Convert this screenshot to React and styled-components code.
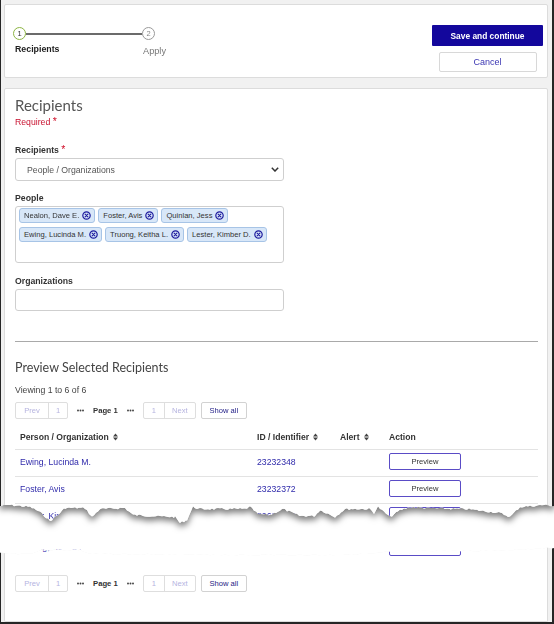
import React from "react";
import styled, { createGlobalStyle } from "styled-components";

const GlobalStyle = createGlobalStyle`
  html, body {
    margin: 0;
    padding: 0;
    background: #fff;
  }
  body {
    font-family: "Liberation Sans", Arial, sans-serif;
    font-size: 8.7px;
    color: #333;
  }
  * {
    box-sizing: border-box;
  }
`;

const people = [
  "Nealon, Dave E.",
  "Foster, Avis",
  "Quinlan, Jess",
  "Ewing, Lucinda M.",
  "Truong, Keitha L.",
  "Lester, Kimber D.",
];

const rows = [
  { name: "Ewing, Lucinda M.", id: "23232348" },
  { name: "Foster, Avis", id: "23232372" },
  { name: "Lester, Kimber D.", id: "52621934" },
];

// torn paper edge, key points traced from the screenshot
const tearKeys = [
  [0, 506], [10, 505], [30, 507], [40, 512], [50, 521], [58, 515], [65, 508],
  [85, 508], [92, 517], [100, 509], [125, 508], [133, 515], [150, 516],
  [175, 517], [180, 523], [187, 520], [193, 507], [200, 509], [245, 509],
  [250, 507], [258, 514], [270, 515], [283, 509], [300, 516], [315, 516],
  [320, 510], [335, 517], [345, 509], [370, 509], [374, 513], [378, 507],
  [390, 517], [400, 510], [410, 507], [427, 508], [467, 509], [500, 513],
  [510, 517], [520, 507], [544, 505], [554, 506],
];

function roughEdge(keys, step, amp, seed) {
  let s = seed;
  const rand = () => {
    s = (s * 9301 + 49297) % 233280;
    return s / 233280;
  };
  const pts = [];
  for (let i = 0; i < keys.length - 1; i++) {
    const [x0, y0] = keys[i];
    const [x1, y1] = keys[i + 1];
    for (let x = x0; x < x1; x += step) {
      const t = (x - x0) / (x1 - x0);
      pts.push([x, y0 + (y1 - y0) * t + (rand() - 0.5) * amp]);
    }
  }
  pts.push(keys[keys.length - 1]);
  return pts;
}

const tearClip = `polygon(0 0, 554px 0, ${roughEdge(tearKeys, 2, 2, 7)
  .reverse()
  .map(([x, y]) => `${x}px ${y.toFixed(1)}px`)
  .join(", ")})`;

const lowerKeys = [
  [0, 7], [12, 7], [18, 8], [34, 7], [40, 4], [80, 4], [90, 8], [250, 9],
  [330, 9], [370, 8], [388, 6], [407, 9], [418, 5], [470, 5], [480, 5], [554, 2],
];

const lowerClip = `polygon(${roughEdge(lowerKeys, 3, 1.2, 3)
  .map(([x, y]) => `${x}px ${y.toFixed(1)}px`)
  .join(", ")}, 554px 100%, 0 100%)`;

const CircleX = () => (
  <svg width="9" height="9" viewBox="0 0 9 9">
    <circle cx="4.5" cy="4.5" r="3.7" fill="none" stroke="#1d1b9e" strokeWidth="1.2" />
    <path d="M3.1 3.1l2.8 2.8M5.9 3.1l-2.8 2.8" stroke="#1d1b9e" strokeWidth="1.1" strokeLinecap="round" />
  </svg>
);

const SortIcon = () => (
  <svg width="5" height="8" viewBox="0 0 5 8">
    <path d="M0 3.4L2.5 0.6 5 3.4z M0 4.6L2.5 7.4 5 4.6z" fill="#444" />
  </svg>
);

const ChevronDown = () => (
  <svg width="8" height="5" viewBox="0 0 8 5">
    <path d="M0.8 0.8L4 4 7.2 0.8" fill="none" stroke="#333" strokeWidth="1.5" />
  </svg>
);

const Dots = () => (
  <DotsIcon width="7" height="3" viewBox="0 0 7 3">
    <circle cx="1" cy="1.5" r="0.95" fill="#444" />
    <circle cx="3.5" cy="1.5" r="0.95" fill="#444" />
    <circle cx="6" cy="1.5" r="0.95" fill="#444" />
  </DotsIcon>
);

function Paging() {
  return (
    <Pager>
      <PagerGroup>
        <PagerCell $w={33}>Prev</PagerCell>
        <PagerCell $w={20}>1</PagerCell>
      </PagerGroup>
      <Dots />
      <PageLabel>Page 1</PageLabel>
      <Dots />
      <PagerGroup>
        <PagerCell $w={21}>1</PagerCell>
        <PagerCell $w={32}>Next</PagerCell>
      </PagerGroup>
      <ShowAll>Show all</ShowAll>
    </Pager>
  );
}

function RecipientRow({ name, id, last }) {
  return (
    <Row $last={last}>
      <Cell>
        <LinkText>{name}</LinkText>
      </Cell>
      <Cell>
        <LinkText>{id}</LinkText>
      </Cell>
      <Cell />
      <Cell>
        <PreviewButton>Preview</PreviewButton>
      </Cell>
    </Row>
  );
}

export default function App() {
  return (
    <>
      <GlobalStyle />
      <Frame>
        <TopTear>
          <TopSheet>
            <HeaderCard>
              <Stepper>
                <StepDot $active>1</StepDot>
                <StepLine />
                <StepDot>2</StepDot>
                <StepLabel $active>Recipients</StepLabel>
                <span />
                <StepLabel>Apply</StepLabel>
              </Stepper>
              <ActionColumn>
                <PrimaryButton>Save and continue</PrimaryButton>
                <SecondaryButton>Cancel</SecondaryButton>
              </ActionColumn>
            </HeaderCard>

            <MainCard>
              <SectionTitle>Recipients</SectionTitle>
              <RequiredNote>
                Required <Star>*</Star>
              </RequiredNote>

              <FieldLabel $top={16.5}>
                Recipients <Star>*</Star>
              </FieldLabel>
              <SelectBox>
                <span>People / Organizations</span>
                <ChevronDown />
              </SelectBox>

              <FieldLabel $top={11}>People</FieldLabel>
              <ChipBox>
                {people.map((p) => (
                  <Chip key={p}>
                    {p}
                    <CircleX />
                  </Chip>
                ))}
              </ChipBox>

              <FieldLabel $top={12}>Organizations</FieldLabel>
              <TextBox />

              <Divider />

              <PreviewTitle>Preview Selected Recipients</PreviewTitle>
              <ViewingText>Viewing 1 to 6 of 6</ViewingText>
              <Paging />

              <Table>
                <HeadRow>
                  <HeadCell>
                    Person / Organization <SortIcon />
                  </HeadCell>
                  <HeadCell>
                    ID / Identifier <SortIcon />
                  </HeadCell>
                  <HeadCell>
                    Alert <SortIcon />
                  </HeadCell>
                  <HeadCell>Action</HeadCell>
                </HeadRow>
                {rows.map((r) => (
                  <RecipientRow key={r.id} name={r.name} id={r.id} />
                ))}
              </Table>
            </MainCard>
          </TopSheet>
        </TopTear>

        <TearGap />

        <BottomSheet>
          <TailCard>
            <CutOff>
              <RecipientRow name="Truong, Keitha L." id="23232391" last />
            </CutOff>
            <Paging />
          </TailCard>
        </BottomSheet>
      </Frame>
    </>
  );
}

const Frame = styled.div`
  width: 554px;
  height: 624px;
  display: flex;
  flex-direction: column;
  overflow: hidden;
  background: #fff;
`;

const TopTear = styled.div`
  height: 530px;
  flex-shrink: 0;
  filter: drop-shadow(0 4px 3px rgba(0, 0, 0, 0.5));
`;

const TopSheet = styled.div`
  height: 100%;
  background: #f1f1f1;
  border-left: 1px solid #262626;
  border-right: 2px solid #262626;
  padding: 4px 4px 0 3px;
  overflow: hidden;
  clip-path: ${tearClip};
`;

const TearGap = styled.div`
  height: 16px;
  flex-shrink: 0;
`;

const BottomSheet = styled.div`
  height: 78px;
  flex-shrink: 0;
  background: #f1f1f1;
  border-left: 1px solid #262626;
  border-right: 2px solid #262626;
  border-bottom: 2px solid #262626;
  padding: 0 4px 2px 3px;
  clip-path: ${lowerClip};
`;

const HeaderCard = styled.div`
  height: 74px;
  background: #fff;
  border: 1px solid #dcdcdc;
  border-radius: 2px;
  padding: 20px 4px 0 8px;
  display: flex;
  justify-content: space-between;
  align-items: flex-start;
`;

const Stepper = styled.div`
  display: grid;
  grid-template-columns: 13px 116px 13px;
  grid-template-rows: 13px auto;
  margin-top: 2px;
`;

const StepDot = styled.div`
  width: 13px;
  height: 13px;
  border-radius: 50%;
  border: 1.5px solid ${(p) => (p.$active ? "#8db543" : "#9a9a9a")};
  color: ${(p) => (p.$active ? "#333" : "#888")};
  font-size: 7.5px;
  display: flex;
  align-items: center;
  justify-content: center;
  background: #fff;
`;

const StepLine = styled.div`
  height: 2px;
  background: #6b6b6b;
  align-self: center;
`;

const StepLabel = styled.div`
  white-space: nowrap;
  line-height: 12px;
  font-size: ${(p) => (p.$active ? "8.8px" : "9.2px")};
  font-weight: ${(p) => (p.$active ? "bold" : "normal")};
  color: ${(p) => (p.$active ? "#222" : "#777")};
  margin-top: ${(p) => (p.$active ? "3px" : "5px")};
  margin-left: ${(p) => (p.$active ? "2px" : "1px")};
`;

const ActionColumn = styled.div`
  display: flex;
  flex-direction: column;
  align-items: center;
  gap: 6px;
`;

const PrimaryButton = styled.button`
  width: 111px;
  height: 21px;
  border: none;
  border-radius: 1px;
  background: #13079c;
  color: #fff;
  font-family: inherit;
  font-size: 8.4px;
  font-weight: bold;
  padding: 0;
`;

const SecondaryButton = styled.button`
  width: 98px;
  height: 20px;
  border: 1px solid #d8d8d8;
  border-radius: 2px;
  background: #fff;
  color: #3b36b3;
  font-family: inherit;
  font-size: 9px;
  padding: 0;
`;

const MainCard = styled.div`
  margin-top: 10px;
  background: #fff;
  border: 1px solid #dcdcdc;
  border-radius: 2px;
  padding: 7px 9px 40px 10px;
`;

const TailCard = styled.div`
  background: #fff;
  border: 1px solid #dcdcdc;
  border-top: none;
  border-radius: 0 0 2px 2px;
  padding: 0 9px 28.5px 10px;
`;

const SectionTitle = styled.h2`
  margin: 0;
  font-family: Lato, "Liberation Sans", sans-serif;
  font-size: 15px;
  line-height: 18px;
  font-weight: 400;
  color: #555;
`;

const PreviewTitle = styled.h3`
  margin: 18px 0 0;
  font-family: Lato, "Liberation Sans", sans-serif;
  font-size: 12.5px;
  line-height: 15px;
  font-weight: 400;
  color: #444;
`;

const RequiredNote = styled.div`
  margin-top: 1.5px;
  height: 12px;
  line-height: 12px;
  color: #c8102e;
`;

const Star = styled.span`
  color: #d0112b;
  font-size: 10.5px;
  line-height: 0;
  font-weight: normal;
`;

const FieldLabel = styled.div`
  margin-top: ${(p) => p.$top}px;
  margin-bottom: 2px;
  height: 12px;
  line-height: 12px;
  font-weight: bold;
  color: #333;
`;

const SelectBox = styled.div`
  width: 269px;
  height: 23px;
  border: 1px solid #cfcfcf;
  border-radius: 3px;
  padding: 0 4px 0 11px;
  display: flex;
  align-items: center;
  justify-content: space-between;
  color: #555;
`;

const ChipBox = styled.div`
  width: 269px;
  height: 57px;
  border: 1px solid #cfcfcf;
  border-radius: 3px;
  padding: 1px 3px;
  display: flex;
  flex-wrap: wrap;
  align-content: flex-start;
  gap: 4px 3px;
`;

const Chip = styled.span`
  height: 15px;
  display: inline-flex;
  align-items: center;
  gap: 3px;
  padding: 0 3px 0 4px;
  background: #d8e7f8;
  border: 1px solid #a7c4e6;
  border-radius: 3px;
  font-size: 7.6px;
  color: #333;
  white-space: nowrap;
`;

const TextBox = styled.div`
  width: 269px;
  height: 22px;
  border: 1px solid #cfcfcf;
  border-radius: 3px;
`;

const Divider = styled.hr`
  margin: 30px 0 0;
  border: none;
  border-top: 1px solid #a9a9a9;
`;

const ViewingText = styled.div`
  margin-top: 9px;
  line-height: 12px;
  color: #444;
`;

const Pager = styled.div`
  margin-top: 6px;
  display: flex;
  align-items: center;
  gap: 9px;
  height: 17px;
  font-size: 7.6px;
`;

const PagerGroup = styled.div`
  display: flex;
  height: 17px;
  border: 1px solid #dedede;
  border-radius: 2px;
`;

const PagerCell = styled.span`
  width: ${(p) => p.$w - 1}px;
  display: flex;
  align-items: center;
  justify-content: center;
  color: #b5b3df;
  & + & {
    border-left: 1px solid #dedede;
  }
`;

const DotsIcon = styled.svg`
  display: block;
`;

const PageLabel = styled.span`
  font-weight: bold;
  font-size: 7.7px;
  color: #333;
`;

const ShowAll = styled.button`
  margin-left: -4px;
  width: 46px;
  height: 17px;
  border: 1px solid #d2d2d2;
  border-radius: 2px;
  background: #fff;
  color: #1f1c85;
  font-family: inherit;
  font-size: 7.6px;
  padding: 0;
`;

const Table = styled.div`
  margin-top: 7px;
`;

const columns = "237px 83px 49px 1fr";

const HeadRow = styled.div`
  display: grid;
  grid-template-columns: ${columns};
  height: 24px;
  padding-bottom: 1px;
  align-items: center;
  border-bottom: 1px solid #e3e3e3;
`;

const HeadCell = styled.div`
  padding-left: 5px;
  display: flex;
  align-items: center;
  gap: 4px;
  font-weight: bold;
  font-size: 8.6px;
  color: #333;
  white-space: nowrap;
`;

const Row = styled.div`
  display: grid;
  grid-template-columns: ${columns};
  height: 27px;
  padding-bottom: 3px;
  align-items: center;
  border-bottom: ${(p) => (p.$last ? "none" : "1px solid #e3e3e3")};
`;

const CutOff = styled.div`
  margin-top: -11px;
  & + div {
    margin-top: 13px;
  }
`;

const Cell = styled.div`
  padding-left: 5px;
  line-height: 12px;
`;

const LinkText = styled.span`
  color: #302bab;
`;

const PreviewButton = styled.button`
  display: block;
  width: 72px;
  height: 17px;
  border: 1.5px solid #5a4cc6;
  border-radius: 2px;
  background: #fff;
  color: #333;
  font-family: inherit;
  font-size: 7.6px;
  padding: 0;
`;
